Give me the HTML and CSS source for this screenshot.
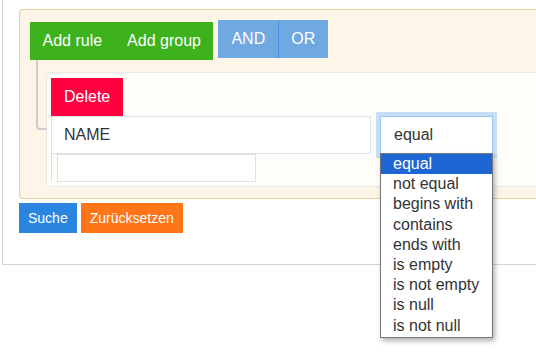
FILE: index.html
```html
<!DOCTYPE html>
<html lang="de">
<head>
  <meta charset="UTF-8">
  <title>Suche</title>
  <link rel="stylesheet" href="styles.css">
</head>
<body>

<div class="page">
  <div class="panel">
    <div class="rules-group">
      <div class="group-header">
        <div class="btn-group add-group">
          <button class="btn btn-green">Add rule</button>
          <button class="btn btn-green">Add group</button>
        </div>
        <div class="btn-group cond-group">
          <button class="btn btn-cond">AND</button>
          <button class="btn btn-cond btn-or">OR</button>
        </div>
      </div>

      <div class="rules-list">
        <div class="rule">
          <button class="btn btn-delete">Delete</button>
          <div class="rule-body">
            <div class="field-row">
              <div class="field">NAME</div>
              <div class="select-wrap">
                <div class="operator">equal</div>
                <ul class="dropdown">
                  <li class="selected">equal</li>
                  <li>not equal</li>
                  <li>begins with</li>
                  <li>contains</li>
                  <li>ends with</li>
                  <li>is empty</li>
                  <li>is not empty</li>
                  <li>is null</li>
                  <li>is not null</li>
                </ul>
              </div>
            </div>
            <input class="value" type="text">
          </div>
        </div>
      </div>
    </div>

    <div class="actions">
      <button class="btn-small btn-search">Suche</button>
      <button class="btn-small btn-reset">Zurücksetzen</button>
    </div>
  </div>
</div>

</body>
</html>
```

FILE: styles.css
```css
html {
  min-height: 100%;
}

body {
  margin: 0;
  min-height: 358px;
  font-family: 'Liberation Sans', Arial, sans-serif;
  background-color: #fff;
  color: #333;
}

.page {
  min-height: 358px;
}

.panel {
  margin-left: 2px;
  border-left: 1px solid #d4d4d4;
  border-bottom: 1px solid #d4d4d4;
  padding: 9px 0 31px 16px;
}

.rules-group {
  background-color: #fcf5e8;
  border: 1px solid #e0cf9f;
  border-right: none;
  border-radius: 4px 0 0 4px;
  padding: 10px 0 11px 10px;
}

.group-header {
  display: flex;
  align-items: flex-start;
  gap: 5px;
}

.btn-group {
  display: flex;
}

.add-group {
  margin-top: 2px;
}

.btn {
  font-family: inherit;
  font-size: 16px;
  height: 38px;
  line-height: 38px;
  padding: 0 12.5px;
  border: none;
  color: #fff;
  cursor: pointer;
}

.btn-green {
  background-color: #3db21d;
}

.btn-cond {
  background-color: #70a8e2;
  padding: 0 13px;
}

.btn-or {
  border-left: 1px solid #4a8ee0;
  padding-left: 12px;
}

.rules-list {
  padding: 12px 0 0 16px;
}

.rule {
  position: relative;
  background-color: #fffdfa;
  border: 1px solid #ece9e4;
  border-right: none;
  border-radius: 4px 0 0 4px;
  padding: 5px 0 4px 4px;
}

/* Verbindungslinie zur Gruppe */
.rule::before {
  content: '';
  position: absolute;
  left: -11px;
  top: -13px;
  width: 11px;
  height: 70px;
  box-sizing: border-box;
  border-left: 2px solid #cccccc;
  border-bottom: 2px solid #cccccc;
  border-bottom-left-radius: 4px;
}

.btn-delete {
  display: block;
  background-color: #ff0040;
  padding: 0 13px;
}

.rule-body {
  border-left: 1px solid #dde0e5;
}

.field-row {
  display: flex;
  align-items: flex-start;
}

.field {
  width: 306px;
  height: 36px;
  line-height: 36px;
  padding-left: 12px;
  font-size: 16px;
  color: #333;
  border: 1px solid #dde0e5;
  border-left: none;
  background-color: #fff;
}

.select-wrap {
  position: relative;
  margin-left: 9px;
}

.operator {
  width: 98px;
  height: 36px;
  line-height: 36px;
  padding-left: 13px;
  font-size: 16px;
  color: #333;
  background-color: #fff;
  border: 1px solid #9fc3ef;
  box-shadow: 0 0 0 4px #c6ddf6;
}

.dropdown {
  position: absolute;
  top: 37px;
  left: 0;
  width: 111px;
  margin: 0;
  padding: 0 0 1px 0;
  list-style: none;
  background-color: #fff;
  border: 1px solid #767676;
  box-shadow: 2px 3px 5px rgba(0,0,0,0.3);
  z-index: 10;
}

.dropdown li {
  height: 20.2px;
  line-height: 20px;
  padding-left: 12px;
  font-size: 16px;
  color: #333;
  white-space: nowrap;
}

.dropdown li.selected {
  background-color: #1d66d4;
  color: #fff;
}

.value {
  display: block;
  margin: 0 0 0 5px;
  width: 199px;
  height: 28px;
  box-sizing: border-box;
  border: 1px solid #dde0e5;
  background-color: #fff;
  padding: 0;
}

.actions {
  display: flex;
  gap: 4px;
  margin-top: 4px;
}

.btn-small {
  font-family: inherit;
  font-size: 14px;
  height: 30px;
  line-height: 30px;
  padding: 0 9px;
  border: none;
  color: #fff;
  cursor: pointer;
}

.btn-search {
  background-color: #2a85e0;
}

.btn-reset {
  background-color: #ff7518;
}
```
